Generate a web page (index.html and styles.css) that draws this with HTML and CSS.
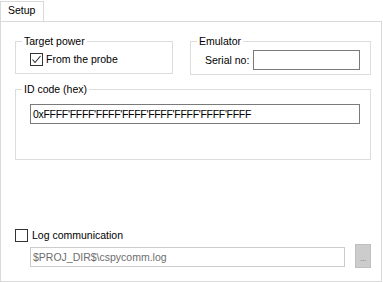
FILE: index.html
```html
<!DOCTYPE html>
<html lang="en">
<head>
    <meta charset="UTF-8">
    <title>Setup</title>
    <link rel="stylesheet" href="styles.css">
</head>
<body>
    <div class="tabs">
        <div class="tab">Setup</div>
    </div>

    <div class="panel">
        <div class="top-row">
            <div class="group power">
                <div class="group-title">Target power</div>
                <label class="check-row">
                    <span class="check">
                        <svg width="11" height="11" viewBox="0 0 11 11"><polyline points="1.5,5.5 4,8.5 9.5,2" fill="none" stroke="#2b2b2b" stroke-width="1.1"/></svg>
                    </span>
                    From the probe
                </label>
            </div>

            <div class="group emulator">
                <div class="group-title">Emulator</div>
                <div class="serial-row">
                    <span class="serial-label">Serial no:</span>
                    <div class="field serial"></div>
                </div>
            </div>
        </div>

        <div class="group idcode">
            <div class="group-title">ID code (hex)</div>
            <div class="field hex">0xFFFF'FFFF'FFFF'FFFF'FFFF'FFFF'FFFF'FFFF</div>
        </div>

        <label class="check-row log">
            <span class="check"></span>
            Log communication
        </label>

        <div class="path-row">
            <div class="field path disabled">$PROJ_DIR$\cspycomm.log</div>
            <div class="browse">...</div>
        </div>
    </div>
</body>
</html>
```

FILE: styles.css
```css
body {
    margin: 0;
    width: 383px;
    height: 282px;
    background: #fff;
    font-family: 'Liberation Sans', Arial, sans-serif;
    font-size: 10.5px;
    color: #000;
    overflow: hidden;
}

/* tab strip */
.tabs {
    height: 20px;
}

.tab {
    position: relative;
    z-index: 1;
    box-sizing: border-box;
    width: 44px;
    height: 20px;
    margin-top: 1px;
    padding-left: 7px;
    border: 1px solid #d9d9d9;
    border-bottom: none;
    background: #fff;
    line-height: 17px;
}

.panel {
    box-sizing: border-box;
    width: 382px;
    height: 261px;
    padding: 19px 0 0 14px;
    border: 1px solid #d9d9d9;
}

/* group boxes */
.group {
    box-sizing: border-box;
    border: 1px solid #dcdcdc;
}

.group-title {
    width: fit-content;
    margin: -7px 0 0 6px;
    padding: 0 2px;
    background: #fff;
    line-height: 13px;
}

.top-row {
    display: flex;
    align-items: flex-start;
    gap: 17px;
}

.power {
    width: 158px;
    padding-bottom: 7px;
}

.power .check-row {
    margin: 5px 0 0 14px;
}

.emulator {
    width: 181px;
    padding-bottom: 4px;
}

.serial-row {
    display: flex;
    align-items: center;
    gap: 4px;
    margin: 2px 0 0 14px;
}

.idcode {
    width: 356px;
    margin-top: 14px;
    padding-bottom: 35px;
}

/* checkboxes */
.check-row {
    display: flex;
    align-items: center;
    gap: 3px;
    line-height: 13px;
}

.check {
    box-sizing: border-box;
    width: 13px;
    height: 13px;
    border: 1px solid #333;
    background: #fff;
    display: flex;
}

.log {
    margin-top: 69px;
    gap: 4px;
}

/* text fields */
.field {
    box-sizing: border-box;
    height: 20px;
    padding: 0 2px;
    border: 1px solid #7a7a7a;
    background: #fff;
    line-height: 18px;
    white-space: nowrap;
}

.serial {
    width: 107px;
}

.hex {
    width: 330px;
    margin: 8px 0 0 14px;
    letter-spacing: -0.3px;
}

.path-row {
    display: flex;
    align-items: flex-start;
    gap: 10px;
    margin: 2px 0 0 15px;
}

.path {
    width: 315px;
    margin-top: 3px;
}

.disabled {
    border-color: #cccccc;
    color: #6d6d6d;
}

.browse {
    box-sizing: border-box;
    width: 16px;
    height: 24px;
    border: 1px solid #bfbfbf;
    background: #cccccc;
    color: #8a8a8a;
    font-size: 9px;
    text-align: center;
    line-height: 26px;
    letter-spacing: -0.5px;
}
```
